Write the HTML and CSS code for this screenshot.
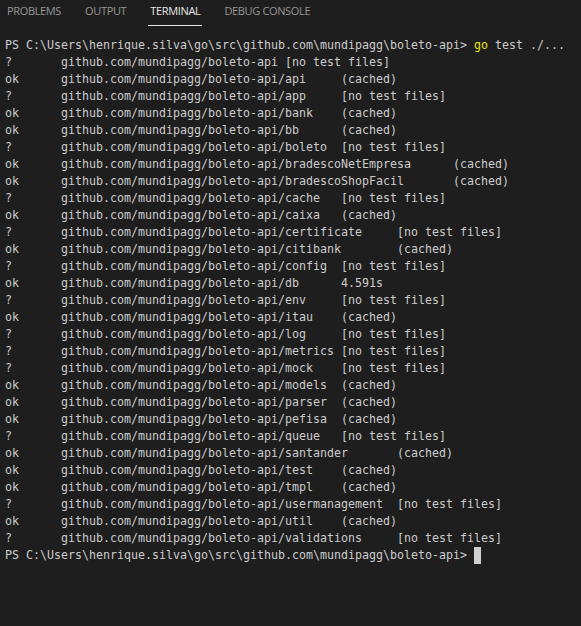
FILE: index.html
```html
<!DOCTYPE html>
<html>
<head>
<meta charset="utf-8">
<link rel="stylesheet" href="styles.css">
</head>
<body>
<div class="panel">
  <div class="tabs">
    <div class="tab">PROBLEMS</div>
    <div class="tab">OUTPUT</div>
    <div class="tab active">TERMINAL</div>
    <div class="tab">DEBUG CONSOLE</div>
  </div>
<pre class="term">PS C:\Users\henrique.silva\go\src\github.com\mundipagg\boleto-api&gt; <span class="cmd">go</span> test ./...
?&#9;github.com/mundipagg/boleto-api&#9;[no test files]
ok&#9;github.com/mundipagg/boleto-api/api&#9;(cached)
?&#9;github.com/mundipagg/boleto-api/app&#9;[no test files]
ok&#9;github.com/mundipagg/boleto-api/bank&#9;(cached)
ok&#9;github.com/mundipagg/boleto-api/bb&#9;(cached)
?&#9;github.com/mundipagg/boleto-api/boleto&#9;[no test files]
ok&#9;github.com/mundipagg/boleto-api/bradescoNetEmpresa&#9;(cached)
ok&#9;github.com/mundipagg/boleto-api/bradescoShopFacil&#9;(cached)
?&#9;github.com/mundipagg/boleto-api/cache&#9;[no test files]
ok&#9;github.com/mundipagg/boleto-api/caixa&#9;(cached)
?&#9;github.com/mundipagg/boleto-api/certificate&#9;[no test files]
ok&#9;github.com/mundipagg/boleto-api/citibank&#9;(cached)
?&#9;github.com/mundipagg/boleto-api/config&#9;[no test files]
ok&#9;github.com/mundipagg/boleto-api/db&#9;4.591s
?&#9;github.com/mundipagg/boleto-api/env&#9;[no test files]
ok&#9;github.com/mundipagg/boleto-api/itau&#9;(cached)
?&#9;github.com/mundipagg/boleto-api/log&#9;[no test files]
?&#9;github.com/mundipagg/boleto-api/metrics&#9;[no test files]
?&#9;github.com/mundipagg/boleto-api/mock&#9;[no test files]
ok&#9;github.com/mundipagg/boleto-api/models&#9;(cached)
ok&#9;github.com/mundipagg/boleto-api/parser&#9;(cached)
ok&#9;github.com/mundipagg/boleto-api/pefisa&#9;(cached)
?&#9;github.com/mundipagg/boleto-api/queue&#9;[no test files]
ok&#9;github.com/mundipagg/boleto-api/santander&#9;(cached)
ok&#9;github.com/mundipagg/boleto-api/test&#9;(cached)
ok&#9;github.com/mundipagg/boleto-api/tmpl&#9;(cached)
?&#9;github.com/mundipagg/boleto-api/usermanagement&#9;[no test files]
ok&#9;github.com/mundipagg/boleto-api/util&#9;(cached)
?&#9;github.com/mundipagg/boleto-api/validations&#9;[no test files]
PS C:\Users\henrique.silva\go\src\github.com\mundipagg\boleto-api&gt; <span class="cursor"></span></pre>
</div>
</body>
</html>
```

FILE: styles.css
```css
html, body {
  margin: 0;
  padding: 0;
  background: #1e1e1e;
}

.panel {
  width: 581px;
  height: 626px;
  background: #1e1e1e;
  overflow: hidden;
}

.tabs {
  display: flex;
  gap: 20px;
  padding-left: 5px;
  height: 26px;
}

.tab {
  font-family: "Open Sans", "Noto Sans", sans-serif;
  font-size: 11px;
  letter-spacing: -0.35px;
  line-height: 16px;
  padding: 3px 2px 6px;
  color: #969696;
  border-bottom: 1px solid transparent;
  height: 16px;
}

.tab.active {
  color: #e7e7e7;
  border-bottom-color: #e7e7e7;
}

.term {
  margin: 11px 0 0;
  padding-left: 5px;
  font-family: "DejaVu Sans Mono", "Liberation Mono", monospace;
  font-size: 11.63px;
  line-height: 17px;
  color: #cccccc;
  tab-size: 8;
  -moz-tab-size: 8;
  white-space: pre;
}

.cmd {
  color: #e5e510;
}

.cursor {
  display: inline-block;
  width: 7px;
  height: 17px;
  vertical-align: top;
  background: #d0d0d0;
}
```
